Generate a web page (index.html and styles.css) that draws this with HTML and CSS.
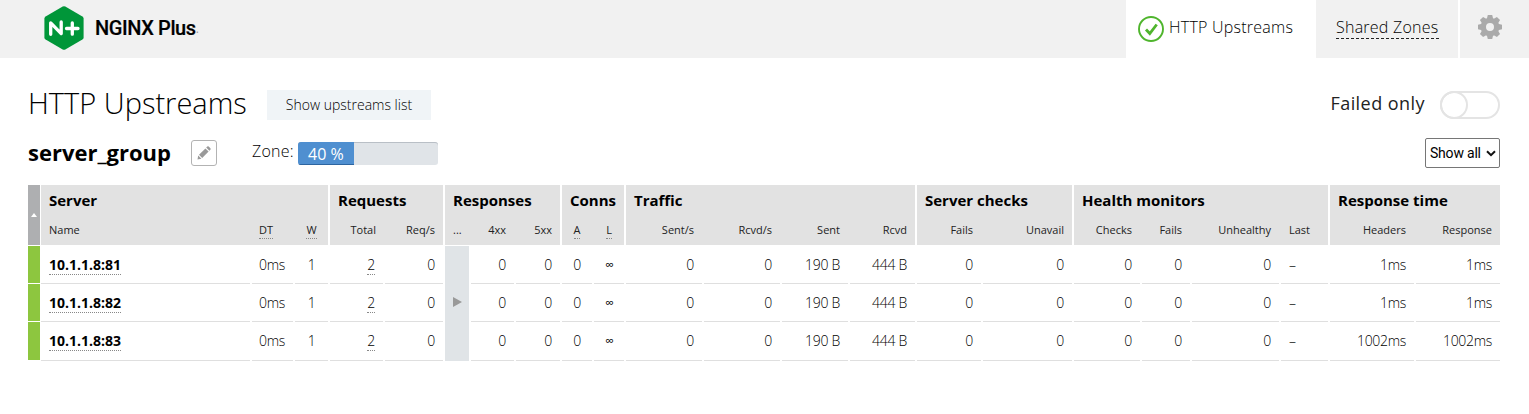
FILE: index.html
```
<!DOCTYPE html>
<html lang="en">
<head>
<meta charset="utf-8">
<title>NGINX Plus</title>
<link rel="stylesheet" href="styles.css">
</head>
<body>
<header class="topbar">
  <div class="logo">
    <svg class="logo-mark" width="40" height="45" viewBox="0 0 40 45"><path d="M18.700 .5Q20 -.2 21.300 .5L38.400 10.400Q39.600 11.200 39.600 12.600V31.400Q39.600 32.900 38.400 33.600L21.300 43.500Q20 44.200 18.700 43.500L1.600 33.600Q.4 32.900 .4 31.400V12.600Q.4 11.200 1.600 10.400Z" fill="#009639"/><path d="M6.700 28.300V16.800L17.200 27.600V16M22.500 22.500H34M28.300 17V28.200" fill="none" stroke="#fff" stroke-width="3.300" stroke-linecap="round" stroke-linejoin="round"/></svg>
    <span class="logo-text">NGINX Plus</span><span class="logo-dot">.</span>
  </div>
  <nav class="tabs">
    <a class="tab tab-active"><svg width="26" height="26" viewBox="0 0 26 26" fill="none" stroke="#4fb52d"><circle cx="13" cy="13" r="12" stroke-width="1.900"/><path d="M8 13.500L11.800 17.500L18.700 8.500" stroke-width="2.800"/></svg><span>HTTP Upstreams</span></a>
    <a class="tab tab-link"><span class="dashed">Shared Zones</span></a>
    <a class="tab tab-gear"><svg width="24" height="24" viewBox="-12 -12 24 24"><g fill="#aaa"><path fill-rule="evenodd" d="M0-9.300A9.300 9.300 0 1 1 0 9.300A9.300 9.300 0 1 1 0-9.300ZM0-4A4 4 0 1 0 0 4A4 4 0 1 0 0-4Z"/><path id="tooth" d="M-3.200-8L-2.200-12H2.200L3.200-8ZM-3.200 8L-2.200 12H2.200L3.200 8Z"/><use href="#tooth" transform="rotate(45)"/><use href="#tooth" transform="rotate(90)"/><use href="#tooth" transform="rotate(135)"/></g></svg></a>
  </nav>
</header>
<main class="content">
  <div class="title-row">
    <h1 class="title">HTTP Upstreams</h1>
    <button class="list-btn">Show upstreams list</button>
    <span class="failed">Failed only</span>
    <span class="toggle"><span class="knob"></span></span>
  </div>
  <div class="group-row">
    <h2 class="group">server_group</h2>
    <span class="edit"><svg width="14" height="14" viewBox="0 0 14 14" fill="#999"><path d="M.5 13.500L1.200 9.600L4.400 12.800ZM2 8.800L8.400 2.400L11.600 5.600L5.200 12ZM9.200 1.600L10.300 .6Q11 0 11.700 .6L13.400 2.300Q14 3 13.400 3.700L12.400 4.800Z"/></svg></span>
    <span class="zone">Zone:</span>
    <span class="bar"><span class="bar-fill" style="width:40%">40 %</span></span>
    <span class="select">Show all<svg width="10" height="7" viewBox="0 0 10 7"><path d="M1 1.200L5 5.200L9 1.200" fill="none" stroke="#111" stroke-width="2"/></svg></span>
  </div>
  <div class="grid">
    <div class="h-sort"><svg width="6" height="4" viewBox="0 0 6 4"><path d="M3 0L6 4H0Z" fill="#fff"/></svg></div>
    <div class="h s3"><b>Server</b><span class="l">Name</span><span class="l dt"><i>DT</i></span><span class="c"><i>W</i></span></div>
    <div class="h s2"><b>Requests</b><span class="total">Total</span><span>Req/s</span></div>
    <div class="h s3"><b>Responses</b><span class="l">...</span><span>4xx</span><span>5xx</span></div>
    <div class="h s2"><b>Conns</b><span class="c"><i>A</i></span><span class="c"><i>L</i></span></div>
    <div class="h s4"><b>Traffic</b><span>Sent/s</span><span>Rcvd/s</span><span>Sent</span><span>Rcvd</span></div>
    <div class="h s2"><b>Server checks</b><span>Fails</span><span>Unavail</span></div>
    <div class="h s4"><b>Health monitors</b><span>Checks</span><span>Fails</span><span>Unhealthy</span><span class="l">Last</span></div>
    <div class="h s2"><b>Response time</b><span>Headers</span><span>Response</span></div>

    <div class="expand"><svg width="9" height="10" viewBox="0 0 9 10"><path d="M0 0L9 5L0 10Z" fill="#999"/></svg></div>

    <div class="row r1"><span class="st"></span><span class="l name"><i>10.1.1.8:81</i></span><span class="l dt">0ms</span><span class="c">1</span><span class="tot"><i>2</i></span><span>0</span><span class="c4">0</span><span>0</span><span class="c">0</span><span class="c inf">∞</span><span>0</span><span>0</span><span>190 B</span><span>444 B</span><span>0</span><span>0</span><span>0</span><span>0</span><span>0</span><span class="l">–</span><span>1ms</span><span>1ms</span></div>
    <div class="row r2"><span class="st"></span><span class="l name"><i>10.1.1.8:82</i></span><span class="l dt">0ms</span><span class="c">1</span><span class="tot"><i>2</i></span><span>0</span><span class="c4">0</span><span>0</span><span class="c">0</span><span class="c inf">∞</span><span>0</span><span>0</span><span>190 B</span><span>444 B</span><span>0</span><span>0</span><span>0</span><span>0</span><span>0</span><span class="l">–</span><span>1ms</span><span>1ms</span></div>
    <div class="row r3"><span class="st"></span><span class="l name"><i>10.1.1.8:83</i></span><span class="l dt">0ms</span><span class="c">1</span><span class="tot"><i>2</i></span><span>0</span><span class="c4">0</span><span>0</span><span class="c">0</span><span class="c inf">∞</span><span>0</span><span>0</span><span>190 B</span><span>444 B</span><span>0</span><span>0</span><span>0</span><span>0</span><span>0</span><span class="l">–</span><span>1002ms</span><span>1002ms</span></div>
  </div>
</main>
</body>
</html>
```
FILE: styles.css
```
* { box-sizing: border-box; }
body { margin: 0; background: #fff; color: #000; font-family: "Open Sans", sans-serif; font-size: 13px; }
.topbar { display: flex; justify-content: space-between; height: 58px; background: #f1f1f1; }
.logo { display: flex; align-items: flex-start; padding: 6px 0 0 44px; }
.logo-text { margin: 8px 0 0 11px; font: 500 20px/28px Roboto, sans-serif; letter-spacing: -.4px; -webkit-text-stroke: .2px #000; white-space: nowrap; }
.logo-dot { margin-top: 14px; color: #999; font-size: 12px; }
.tabs { display: flex; font-size: 16px; font-weight: 300; line-height: 22px; letter-spacing: .24px; color: #000; }
.tab { display: flex; white-space: nowrap; }
.tab-active { width: 190px; padding: 16px 0 0 12px; gap: 5px; background: #fff; }
.tab-link { width: 142px; padding: 16px 0 0 20px; }
.tab-gear { width: 71px; padding: 15px 0 0 18px; border-left: 2px solid #fff; }
.dashed { height: 23px; border-bottom: 1px dashed #222; }

.content { padding: 0 29px 0 28px; }
.title-row { display: flex; align-items: flex-start; height: 80px; padding-top: 26px; }
.title { margin: -1px 0 0; font-size: 29px; font-weight: 300; line-height: 40px; white-space: nowrap; width: 239px; }
.list-btn { width: 164px; height: 30px; margin-top: 6px; padding: 0; border: 0; background: #f0f4f7; font: 300 14px/28px "Open Sans", sans-serif; color: #000; }
.failed { margin: 7px 15px 0 auto; font-size: 18px; font-weight: 400; line-height: 25px; letter-spacing: .45px; color: #222; white-space: nowrap; }
.toggle { width: 60px; height: 28px; margin-top: 7px; border: 2px solid #e4e4e4; border-radius: 14px; }
.knob { display: block; width: 28px; height: 28px; margin: -2px; border: 2px solid #e4e4e4; border-radius: 50%; }
.group-row { display: flex; align-items: flex-start; height: 47px; }
.group { width: 163px; margin: -1px 0 0; font-size: 22px; font-weight: 700; line-height: 30px; white-space: nowrap; }
.edit { display: flex; align-items: center; justify-content: center; width: 26px; height: 26px; margin-top: 2px; border: 1px solid #b3b3b3; border-radius: 3px; }
.zone { width: 46px; margin-left: 35px; font-size: 16px; font-weight: 300; line-height: 26px; letter-spacing: .2px; white-space: nowrap; }
.bar { width: 140px; height: 23px; margin-top: 4px; border-radius: 3px; background: #e0e4e8; box-shadow: inset 0 1px #b9bfc6; overflow: hidden; }
.bar-fill { display: block; height: 23px; padding-left: 10px; background: #4f8fd0; box-shadow: inset 0 -1px #2d65a0; color: #fff; font-size: 16px; font-weight: 400; line-height: 24px; white-space: nowrap; }
.select { display: flex; align-items: center; gap: 5px; width: 75px; height: 30px; margin-left: auto; padding-left: 4px; border: 1px solid #767676; border-radius: 2px; font: 14px Roboto, sans-serif; letter-spacing: -.2px; white-space: nowrap; }

.grid { display: grid; column-gap: 2px; grid-template-rows: 61px 38px 38px 39px; grid-template-columns: 11px 209px 41px 33px 53px 58px 24px 43px 44px 30px 30px 76px 76px 66px 65px 64px 89px 66px 48px 87px 47px 84px 84px; }
.h-sort { display: flex; align-items: center; justify-content: center; width: 12px; height: 60px; background: #aeafb1; }
.h { display: grid; grid-template-columns: subgrid; grid-template-rows: 32px 28px; height: 60px; background: #e2e2e2; }
.s2 { grid-column: span 2; }
.s3 { grid-column: span 3; }
.s4 { grid-column: span 4; }
.h b { grid-column: 1 / -1; padding-left: 8px; font-size: 15px; line-height: 30px; white-space: nowrap; }
.h span { padding: 4px 8px 0 0; font-size: 11px; font-weight: 400; line-height: 17px; color: #222; text-align: right; white-space: nowrap; }
.h .total { padding-right: 7px; }
.h .l, .row .l { padding-left: 8px; padding-right: 0; text-align: left; }
.h .dt, .row .dt { padding-left: 7px; }
.h .c, .row .c { padding-left: 0; padding-right: 0; text-align: center; }
i { display: inline-block; border-bottom: 1px dotted #888; font-style: normal; }
.row { display: contents; }
.row span { border-bottom: 1px solid #dfdfdf; padding: 9px 8px 0 0; font-size: 14px; letter-spacing: -.3px; font-weight: 300; line-height: 20px; text-align: right; white-space: nowrap; }
.row i { line-height: 19px; }
.row .name { font-size: 14px; font-weight: 700; letter-spacing: 0; }
.row .st { width: 12px; background: #8dc63f; border-color: #fff; }
.r1 > span { grid-row: 2; }
.r2 > span { grid-row: 3; }
.r3 > span { grid-row: 4; }
.c4 { grid-column: 8; }
.row .inf { font-size: 12px; font-weight: 400; }
.expand { grid-column: 7; grid-row: 2 / 5; display: flex; align-items: center; justify-content: center; padding-bottom: 3px; background: #e0e4e7; }
```
